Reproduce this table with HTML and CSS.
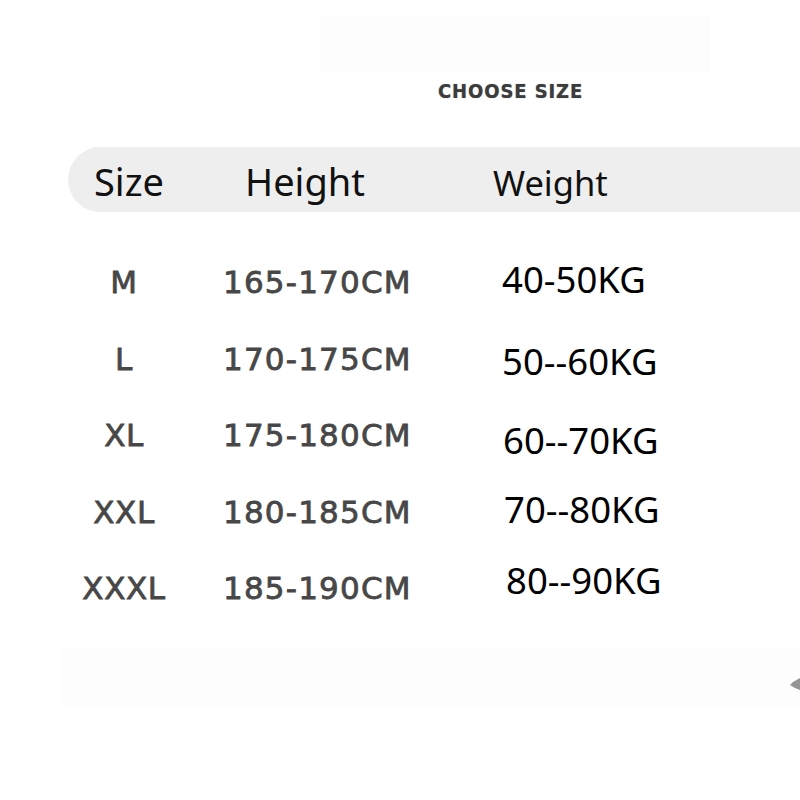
FILE: index.html
```html
<!DOCTYPE html>
<html lang="en">
<head>
<meta charset="utf-8">
<title>Choose Size</title>
<link rel="stylesheet" href="styles.css">
</head>
<body>
<div class="page">
  <div class="ghost"></div>
  <div class="title">CHOOSE SIZE</div>
  <div class="bar">
    <span class="h h-size">Size</span>
    <span class="h h-height">Height</span>
    <span class="h h-weight">Weight</span>
  </div>
  <div class="table">
    <div class="sh">
      <div class="sz">M</div><div class="ht">165-170CM</div>
      <div class="sz">L</div><div class="ht">170-175CM</div>
      <div class="sz">XL</div><div class="ht">175-180CM</div>
      <div class="sz">XXL</div><div class="ht">180-185CM</div>
      <div class="sz">XXXL</div><div class="ht">185-190CM</div>
    </div>
    <div class="weights">
      <div class="wt w1">40-50KG</div>
      <div class="wt w2">50--60KG</div>
      <div class="wt w3">60--70KG</div>
      <div class="wt w4">70--80KG</div>
      <div class="wt w5">80--90KG</div>
    </div>
  </div>
  <div class="band">
    <svg class="blob" width="12" height="14" viewBox="0 0 12 14"><path d="M12 1 L12 13 L7 11 L2 8 L5 5 Z" fill="#666" opacity="0.7"/></svg>
  </div>
</div>
</body>
</html>
```

FILE: styles.css
```css
html, body {
  margin: 0;
  padding: 0;
  background: #ffffff;
}
.page {
  width: 800px;
  height: 800px;
  overflow: hidden;
  padding-top: 15px;
  box-sizing: border-box;
}
.ghost {
  margin-left: 320px;
  width: 390px;
  height: 57px;
  background: #fdfdfd;
}
.title {
  margin-top: 9px;
  padding-left: 438px;
  height: 20px;
  line-height: 20px;
  font-family: "DejaVu Sans Condensed", "DejaVu Sans", sans-serif;
  font-stretch: condensed;
  font-weight: bold;
  font-size: 20px;
  letter-spacing: 0.9px;
  color: #3c3c3c;
  text-shadow: 0 0 1px rgba(60,60,60,0.6);
}
.bar {
  margin-top: 46px;
  margin-left: 68px;
  height: 65px;
  box-sizing: border-box;
  padding-top: 15px;
  background: #eeeeee;
  border-radius: 33px 0 0 33px;
  display: flex;
  align-items: baseline;
  font-family: "Noto Sans", sans-serif;
  color: #111111;
}
.h {
  line-height: 1;
}
.h-size {
  font-size: 38px;
  margin-left: 26px;
  width: 151px;
}
.h-height {
  font-size: 38px;
  width: 248px;
}
.h-weight {
  font-size: 34.5px;
}
.table {
  display: flex;
  margin-top: 32px;
}
.sh {
  display: grid;
  grid-template-columns: 120px 240px;
  grid-auto-rows: 76.5px;
  column-gap: 39px;
  margin-left: 64px;
  font-family: "DejaVu Sans", sans-serif;
  font-size: 31px;
  line-height: 76.5px;
  color: #474747;
  letter-spacing: 0.6px;
  -webkit-text-stroke: 0.8px #474747;
}
.sz {
  text-align: center;
}
.ht {
  letter-spacing: 1.2px;
}
.weights {
  margin-left: 39px;
  margin-top: 15px;
  display: flex;
  flex-direction: column;
  font-family: "Noto Sans", sans-serif;
  font-size: 36.5px;
  line-height: 40px;
  color: #000000;
}
.w2 { margin-top: 42px; }
.w3 { margin-top: 39px; padding-left: 1px; }
.w4 { margin-top: 29px; padding-left: 2px; }
.w5 { margin-top: 31px; padding-left: 4px; }
.band {
  margin-top: 22px;
  margin-left: 60px;
  height: 57px;
  background: #fdfdfd;
  display: flex;
  justify-content: flex-end;
  align-items: center;
}
.blob {
  display: block;
  margin-top: 14px;
}
```
